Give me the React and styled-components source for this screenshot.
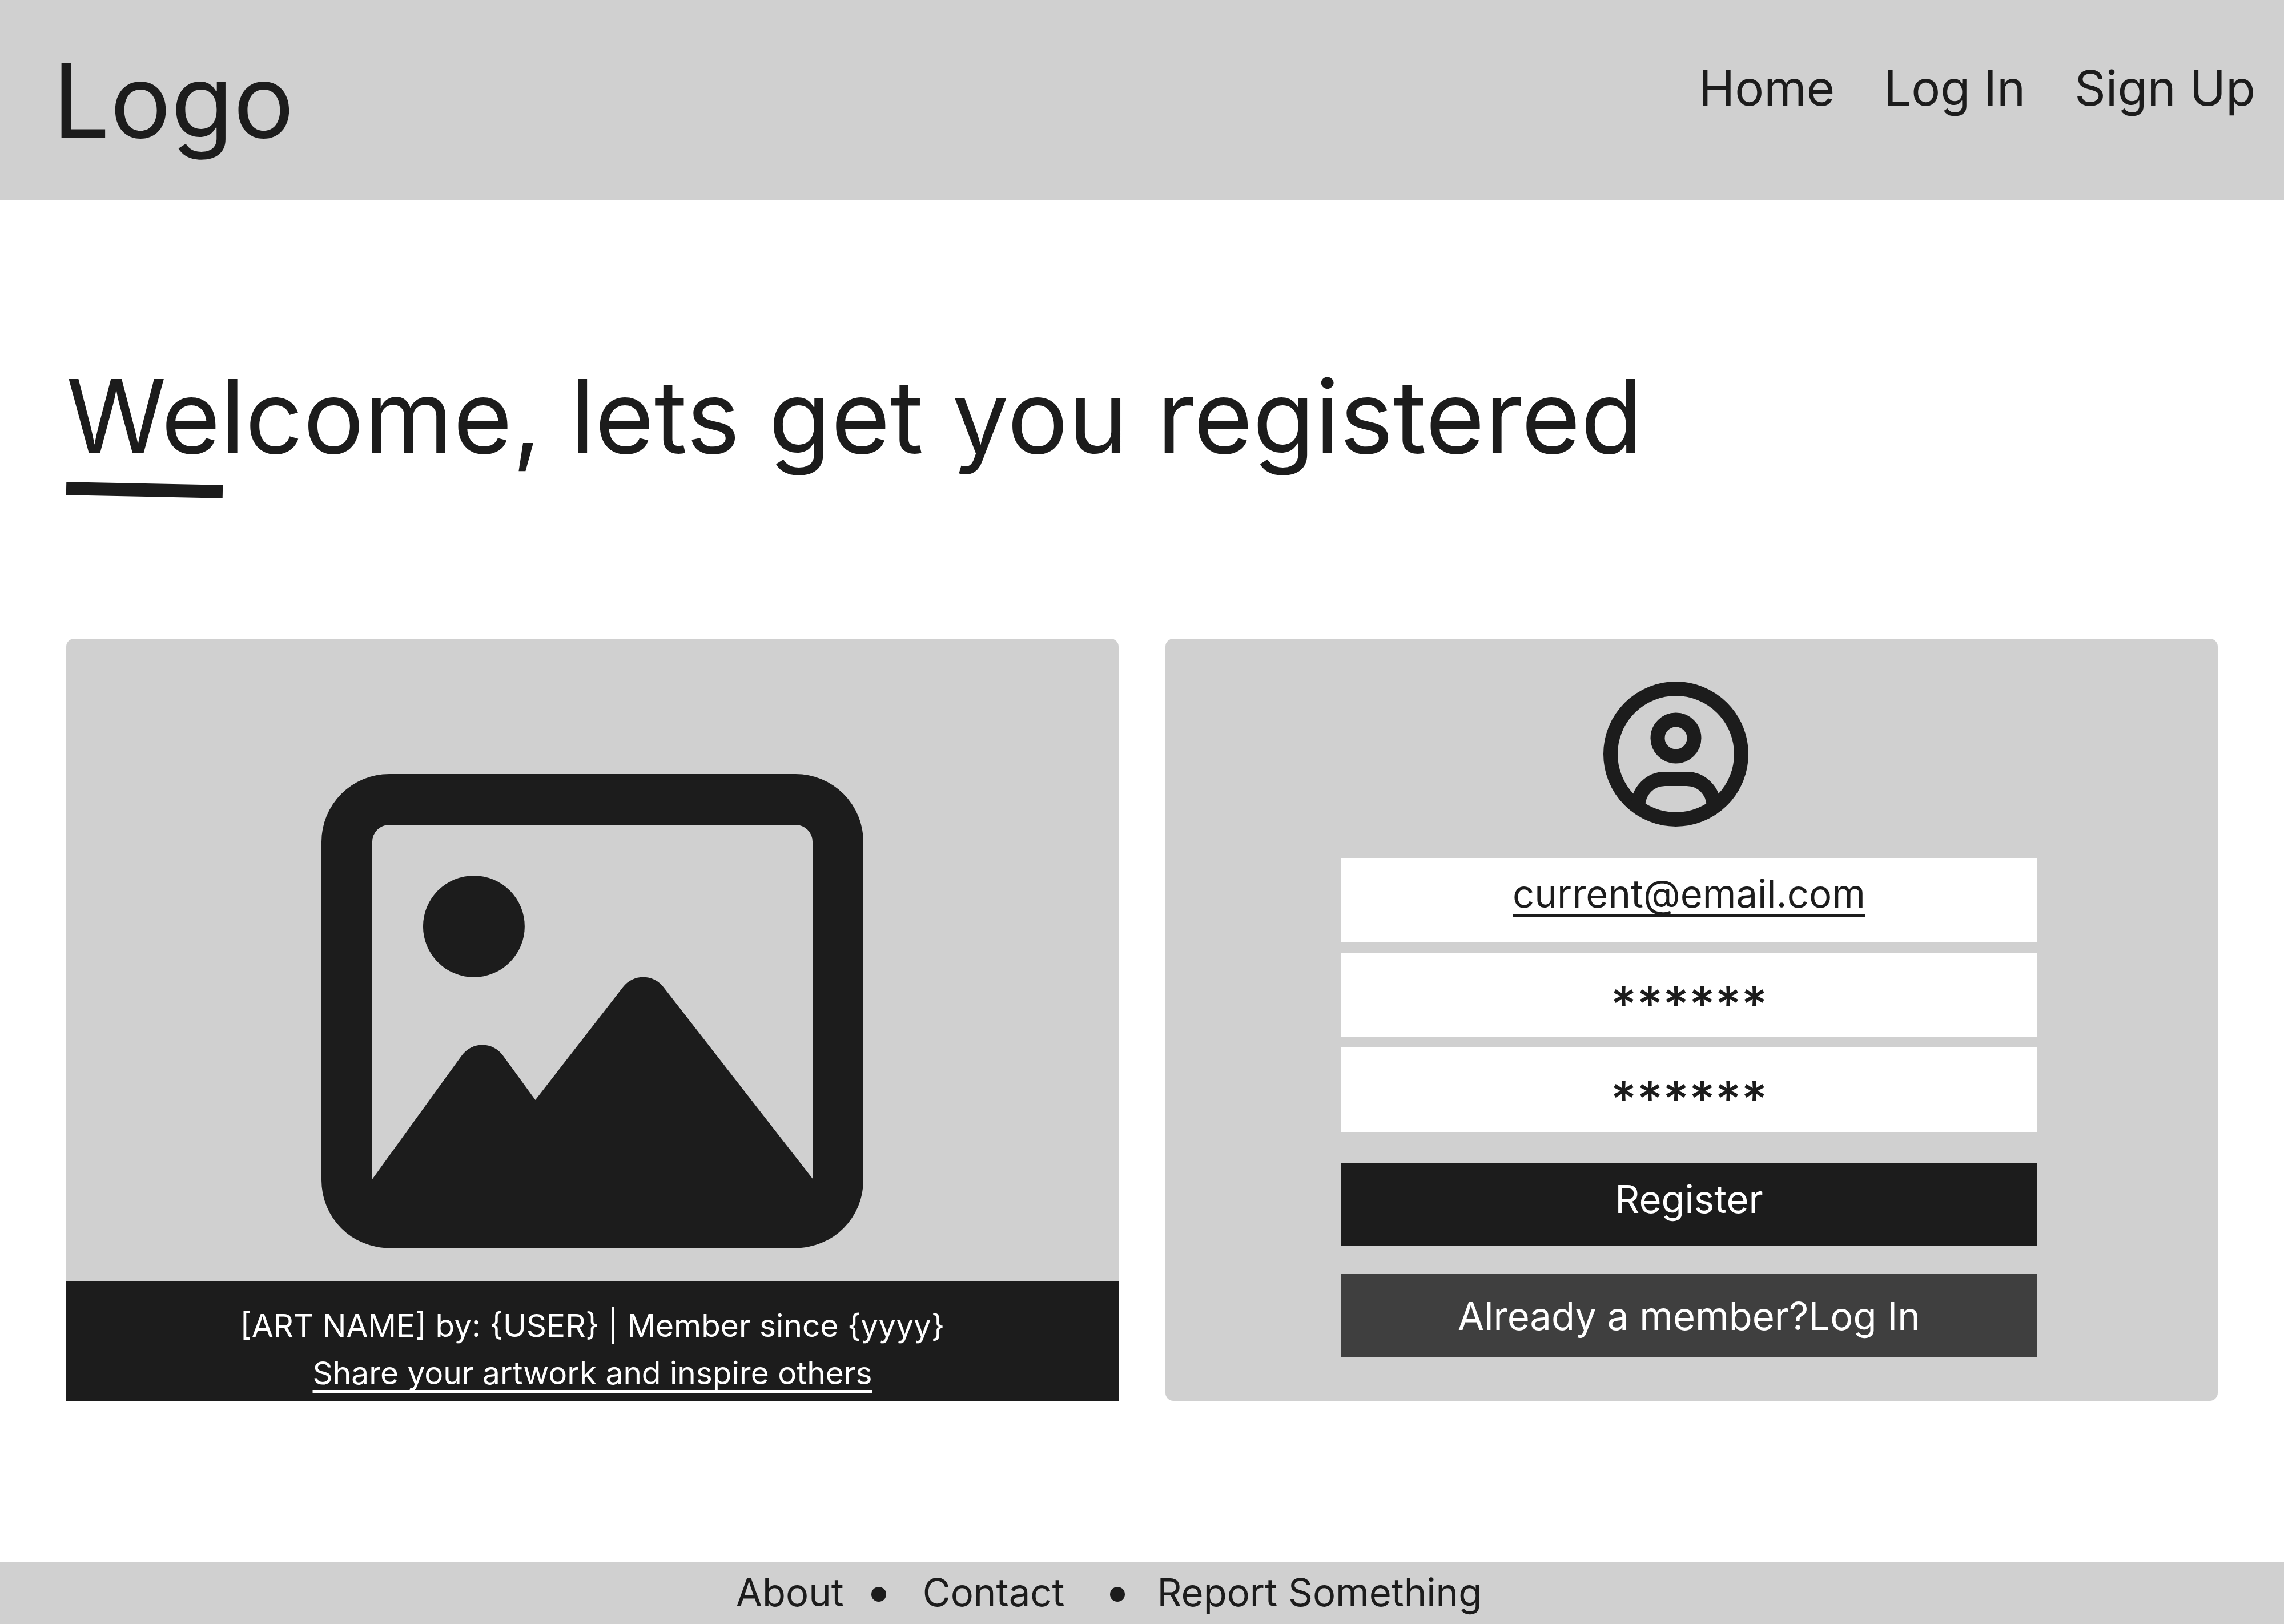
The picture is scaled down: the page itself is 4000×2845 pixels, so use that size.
import React, { useState } from "react";
import styled, { createGlobalStyle } from "styled-components";

const ink = "#1c1c1c";
const panel = "#d0d0d0";

const GlobalStyle = createGlobalStyle`
  *, *::before, *::after { box-sizing: border-box; }
  body {
    margin: 0;
    background: #fff;
    color: ${ink};
    font-family: Inter, "Liberation Sans", sans-serif;
    font-size: 67px;
  }
  a { color: inherit; text-decoration: none; }
`;

const Page = styled.div`
  min-height: 100vh;
  display: flex;
  flex-direction: column;
`;

const Header = styled.header`
  display: flex;
  align-items: center;
  justify-content: space-between;
  padding: 69px 50px 66px 92px;
  background: ${panel};
`;

const Logo = styled.a`
  font-size: 178px;
  line-height: 216px;
`;

const Nav = styled.nav`
  display: flex;
  gap: 86px;
  padding-bottom: 44px;
  font-size: 85px;
  line-height: 106px;
`;

const Main = styled.main`
  flex: 1;
  padding: 271px 116px 282px;
`;

const Title = styled.h1`
  margin: 0;
  font-size: 178px;
  font-weight: 400;
  line-height: 216px;
`;

const TitleMark = styled.div`
  width: 274px;
  height: 23px;
  margin: 9px 0 249px;
  background: ${ink};
  transform: rotate(1.2deg);
`;

const Columns = styled.div`
  display: grid;
  grid-template-columns: 1fr 1fr;
  gap: 82px;
`;

const ArtCard = styled.figure`
  display: flex;
  flex-direction: column;
  margin: 0;
  background: ${panel};
  border-radius: 14px 14px 0 0;
`;

const ArtFrame = styled.div`
  flex: 1;
  display: flex;
  justify-content: center;
  align-items: flex-end;
  padding-bottom: 58px;

  svg { display: block; width: 949px; max-width: 100%; height: auto; }
`;

const Caption = styled.figcaption`
  padding: 37px 0 7px;
  background: ${ink};
  color: #fff;
  font-size: 55px;
  line-height: 83px;
  text-align: center;
`;

const ShareLink = styled.a`
  && {
    text-decoration: underline;
    text-decoration-thickness: 5px;
    text-decoration-skip-ink: none;
    text-underline-offset: 10px;
  }
`;

const Form = styled.form`
  display: flex;
  flex-direction: column;
  padding: 75px 317px 76px 308px;
  background: ${panel};
  border-radius: 14px;
`;

const Avatar = styled.div`
  display: flex;
  justify-content: center;
  margin-bottom: 55px;
  padding-right: 46px;

  svg { display: block; width: 254px; height: 254px; }
`;

const Fields = styled.div`
  display: grid;
  gap: 18px;
  margin-bottom: 55px;
`;

const Field = styled.input`
  width: 100%;
  height: 148px;
  margin: 0;
  padding: ${(p) => (p.$masked ? "32px 24px 0" : "0 24px 24px")};
  border: 0;
  border-radius: 0;
  background: #fff;
  color: ${ink};
  font-family: inherit;
  font-size: ${(p) => (p.$masked ? "88px" : "67px")};
  font-weight: ${(p) => (p.$masked ? 500 : 400)};
  text-align: center;
  text-decoration: ${(p) => (p.$masked ? "none" : "underline 6px")};
  text-decoration-skip-ink: none;
  text-underline-offset: 12px;
`;

const Submit = styled.button`
  height: 145px;
  margin: 0 0 49px;
  padding: 0 24px 20px;
  border: 0;
  background: ${ink};
  color: #fff;
  font-family: inherit;
  font-size: 67px;
`;

const MemberBar = styled.p`
  display: flex;
  align-items: center;
  justify-content: center;
  height: 146px;
  margin: 0;
  background: #3f3f3f;
  color: #fff;
`;

const Footer = styled.footer`
  display: flex;
  align-items: center;
  justify-content: center;
  padding: 12px 116px 13px 0;
  background: ${panel};
  line-height: 84px;
`;

const Dot = styled.span`
  width: 26px;
  height: 26px;
  margin: 6px ${(p) => p.$after}px 0 ${(p) => p.$before}px;
  border-radius: 50%;
  background: ${ink};
`;

function PictureIcon() {
  return (
    <svg viewBox="0 0 32 28" fill={ink} aria-hidden="true">
      <path
        fillRule="evenodd"
        d="M4 0H28A4 4 0 0 1 32 4V24A4 4 0 0 1 28 28H4A4 4 0 0 1 0 24V4A4 4 0 0 1 4 0Z
           M4 3A1 1 0 0 0 3 4V23.93L8.28 16.63A1.5 1.5 0 0 1 10.72 16.63L12.63 19.25L17.81 12.58A1.5 1.5 0 0 1 20.19 12.58L29 23.9V4A1 1 0 0 0 28 3Z"
      />
      <circle cx="9" cy="9" r="3" />
    </svg>
  );
}

function UserIcon() {
  return (
    <svg viewBox="-127 -127 254 254" fill="none" stroke={ink} strokeWidth="25" aria-hidden="true">
      <circle r="114.5" />
      <circle cy="-28" r="32" />
      <path d="M-66 90.5A47 47 0 0 1 -19 43.5H19A47 47 0 0 1 66 90.5" />
    </svg>
  );
}

export default function App() {
  const [email, setEmail] = useState("current@email.com");
  const [password, setPassword] = useState("******");
  const [repeat, setRepeat] = useState("******");

  return (
    <Page>
      <GlobalStyle />
      <Header>
        <Logo href="#">Logo</Logo>
        <Nav>
          <a href="#home">Home</a>
          <a href="#login">Log In</a>
          <a href="#signup">Sign Up</a>
        </Nav>
      </Header>
      <Main>
        <Title>Welcome, lets get you registered</Title>
        <TitleMark />
        <Columns>
          <ArtCard>
            <ArtFrame>
              <PictureIcon />
            </ArtFrame>
            <Caption>
              <div>[ART NAME] by: {"{USER}"} | Member since {"{yyyy}"}</div>
              <div>
                <ShareLink href="#share">Share your artwork and inspire others</ShareLink>
              </div>
            </Caption>
          </ArtCard>
          <Form onSubmit={(e) => e.preventDefault()}>
            <Avatar>
              <UserIcon />
            </Avatar>
            <Fields>
              <Field
                aria-label="Email"
                spellCheck={false}
                value={email}
                onChange={(e) => setEmail(e.target.value)}
              />
              <Field
                $masked
                aria-label="Password"
                value={password}
                onChange={(e) => setPassword(e.target.value)}
              />
              <Field
                $masked
                aria-label="Repeat password"
                value={repeat}
                onChange={(e) => setRepeat(e.target.value)}
              />
            </Fields>
            <Submit type="submit">Register</Submit>
            <MemberBar>
              Already a member?<a href="#login">Log In</a>
            </MemberBar>
          </Form>
        </Columns>
      </Main>
      <Footer>
        <a href="#about">About</a>
        <Dot $before={48} $after={64} />
        <a href="#contact">Contact</a>
        <Dot $before={80} $after={56} />
        <a href="#report">Report Something</a>
      </Footer>
    </Page>
  );
}
